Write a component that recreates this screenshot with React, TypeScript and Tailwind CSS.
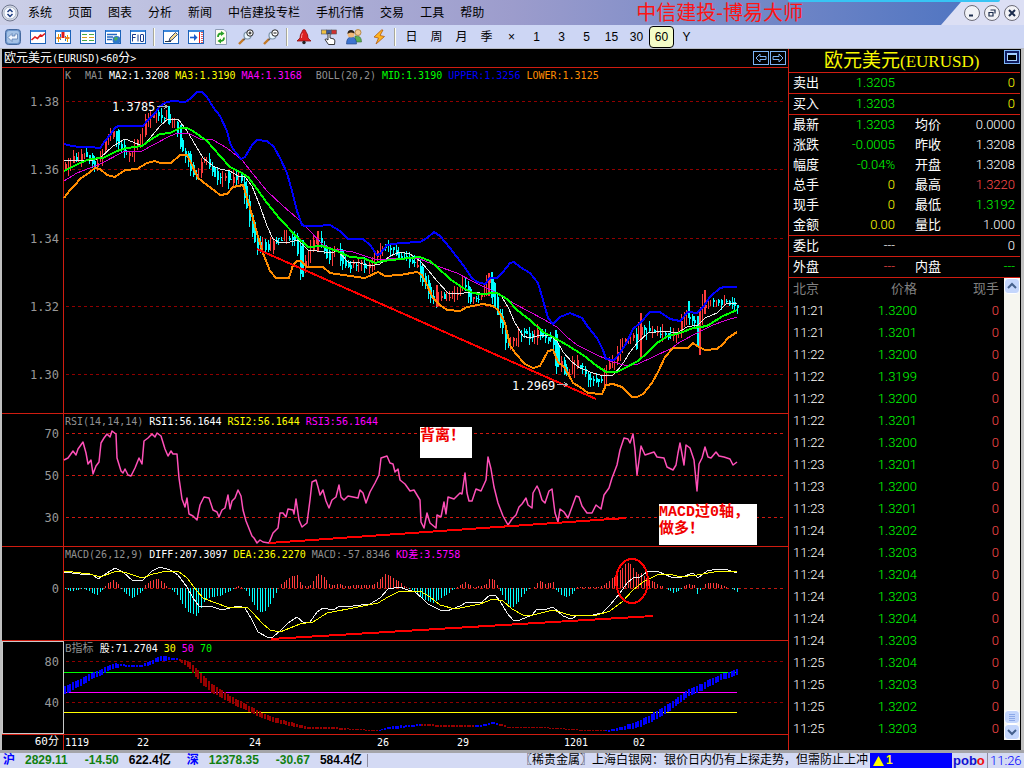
import React from "react";

type Pt = [number, number];

const MONO = "font-['DejaVu_Sans_Mono','Noto_Sans_CJK_SC',monospace]";
const SANS = "font-['Roboto','Noto_Sans_CJK_SC',sans-serif]";

/* ---------- series helpers ---------- */

const parse = (s: string): Pt[] =>
  s.trim().split(/\s+/).map((p) => p.split(",").map(Number) as Pt);

const at = (pts: Pt[], x: number): number => {
  if (x <= pts[0][0]) return pts[0][1];
  for (let i = 1; i < pts.length; i++) {
    if (x <= pts[i][0]) {
      const [x0, y0] = pts[i - 1];
      const [x1, y1] = pts[i];
      return y0 + ((y1 - y0) * (x - x0)) / (x1 - x0 || 1);
    }
  }
  return pts[pts.length - 1][1];
};

const noise = (i: number, k: number): number => {
  const v = Math.sin(i * 12.9898 + k * 78.233) * 43758.5453;
  return v - Math.floor(v);
};

const FIRST = 65;
const LAST = 737;
const STEP = (LAST - FIRST) / 252;
const slots = Array.from({ length: 253 }, (_, i) => Math.round(FIRST + i * STEP));

/* ---------- price pane ---------- */

const upper =
  "64,144 72,146 80,147 90,147 100,148 105,141 110,135 115,128 118,126 143,126 147,121 155,113 160,106 167,102 173,101 185,102 190,99 197,92 202,92 207,97 213,107 220,116 227,131 230,143 233,149 241,159 245,157 252,145 257,140 267,141 274,147 280,158 287,173 292,191 297,211 302,225 305,226 317,226 330,225 340,231 348,239 363,239 370,245 377,255 380,254 387,245 400,243 420,242 427,238 434,232 440,236 450,248 463,265 472,278 477,282 485,284 490,278 497,278 503,272 510,263 514,262 520,267 530,273 538,283 543,300 548,318 553,324 560,317 570,313 582,318 588,327 597,338 603,350 606,359 614,360 620,353 627,342 633,329 640,323 650,312 660,312 670,319 680,321 688,312 697,313 703,307 710,297 720,288 725,287 737,287";
const mid =
  "64,171 80,163 90,159 103,158 117,151 127,148 142,146 150,140 160,134 170,133 180,128 187,128 193,131 207,141 220,156 230,167 240,172 248,177 257,189 267,203 280,219 297,237 308,247 322,246 337,251 350,257 363,258 375,263 383,261 400,259 420,257 430,261 437,267 450,279 463,288 473,293 480,294 497,293 507,299 517,310 530,320 543,332 553,337 567,345 583,355 597,366 606,372 617,372 627,367 638,361 647,353 657,343 668,336 680,333 693,328 707,326 723,316 737,310";
const ma2 =
  "64,160 90,161 100,158 113,146 125,139 133,142 142,146 150,138 160,126 168,119 178,119 187,131 193,141 203,158 213,166 220,169 230,171 238,176 245,177 252,186 260,206 267,226 273,239 280,243 290,242 298,240 308,250 317,251 330,253 338,251 348,262 360,263 370,266 380,264 390,256 400,252 410,254 420,261 428,270 437,281 448,293 460,294 468,292 480,293 500,294 508,307 515,323 523,336 530,338 540,335 550,336 557,341 563,352 572,362 580,368 593,373 603,376 613,375 622,365 630,352 638,342 648,333 665,331 677,333 687,327 698,325 705,318 717,313 727,303 737,303";
const ma4 =
  "64,181 77,173 100,164 123,152 142,151 153,145 170,136 178,133 190,134 200,139 213,140 227,148 242,160 253,174 267,191 283,206 297,218 310,231 323,245 333,249 353,252 377,260 400,258 420,259 437,266 457,273 472,281 480,285 497,293 513,303 530,312 543,319 557,327 567,337 577,345 593,353 610,361 627,366 638,364 653,357 672,348 680,342 697,333 713,325 727,320 737,317";
const lower =
  "64,198 70,190 75,185 80,179 90,172 95,168 100,169 107,175 115,177 125,170 137,169 147,163 155,161 160,163 171,163 180,155 187,155 192,165 198,178 207,185 215,191 220,195 227,194 233,187 243,185 245,191 250,208 257,233 263,253 270,271 276,278 289,278 293,265 297,261 301,261 307,267 323,267 330,273 343,275 365,278 378,272 385,276 400,275 417,272 422,275 427,285 433,298 440,305 447,310 460,311 467,307 483,304 493,306 498,310 505,323 510,345 515,353 525,364 533,368 540,366 548,351 553,350 558,362 565,368 573,383 580,387 588,393 602,394 606,385 613,384 622,387 632,397 637,397 643,394 652,383 658,372 665,357 673,348 688,348 693,343 697,346 705,350 717,349 723,344 728,338 737,332";
const closes = parse(
  "64,170 70,164 75,157 80,158 84,152 90,158 95,165 100,160 103,150 107,140 112,131 116,128 118,140 122,148 126,152 130,155 134,150 138,141 141,145 145,124 150,118 155,115 160,114 165,117 168,115 171,122 175,121 178,128 180,140 183,149 187,153 190,163 195,173 198,175 202,163 206,161 210,165 215,172 219,178 222,179 226,172 230,180 235,178 240,176 243,180 246,198 249,210 252,222 256,240 259,248 263,243 267,246 270,248 275,240 280,240 285,237 290,236 295,238 297,240 300,258 302,270 306,262 309,255 313,243 317,236 322,243 326,250 330,258 334,252 338,247 342,258 346,262 351,266 356,262 362,263 367,266 370,267 374,260 378,256 382,248 386,246 390,245 395,250 400,256 405,257 410,262 414,263 420,268 422,278 427,284 431,296 436,303 440,298 444,295 447,300 452,295 458,293 462,288 465,280 469,292 472,303 476,296 481,297 485,293 488,280 491,278 494,295 497,308 500,318 504,328 508,344 512,341 516,340 521,334 526,330 531,338 536,333 539,330 544,338 550,338 554,333 558,365 562,360 566,372 570,376 573,366 578,362 582,365 586,373 590,379 595,378 600,379 605,376 608,368 613,363 618,353 622,346 626,342 630,340 635,332 638,345 640,325 644,330 648,330 654,328 658,332 664,332 669,335 674,335 679,330 684,320 688,313 692,318 696,325 698,335 700,318 704,300 708,304 712,302 716,300 720,303 726,302 731,304 737,305",
);

interface Candle {
  x: number;
  high: number;
  low: number;
  top: number;
  bottom: number;
  up: boolean;
}

const candles: Candle[] = slots.map((x, i) => {
  const a = at(closes, x - 2) + (noise(i, 1) - 0.5) * 6;
  const b = at(closes, x + 2) + (noise(i, 2) - 0.5) * 6;
  const top = Math.round(Math.min(a, b));
  const bottom = Math.round(Math.max(a, b)) + 1;
  return {
    x,
    top,
    bottom,
    high: Math.round(top - noise(i, 3) * 7),
    low: Math.round(bottom + noise(i, 4) * 7),
    up: b < a,
  };
});

const spikes: { x: number; y1: number; y2: number; up: boolean }[] = [
  { x: 168, y1: 106, y2: 124, up: false },
  { x: 302, y1: 240, y2: 277, up: false },
  { x: 317, y1: 231, y2: 252, up: true },
  { x: 436, y1: 285, y2: 307, up: true },
  { x: 488, y1: 273, y2: 296, up: true },
  { x: 491, y1: 272, y2: 298, up: false },
  { x: 555, y1: 330, y2: 366, up: false },
  { x: 640, y1: 313, y2: 357, up: true },
  { x: 688, y1: 301, y2: 318, up: false },
  { x: 697, y1: 316, y2: 346, up: false },
  { x: 699, y1: 312, y2: 355, up: true },
  { x: 704, y1: 290, y2: 314, up: true },
];

const RED = "#ff3c3c";
const CYAN = "#00ffff";

/* ---------- oscillator panes ---------- */

const rsi =
  "64,460 68,458 73,451 76,455 78,449 83,442 86,453 88,464 91,460 93,474 96,466 99,462 101,443 104,438 107,434 110,437 112,431 116,434 117,458 121,471 123,473 125,469 128,475 131,476 135,468 139,458 142,464 144,441 148,438 152,434 155,437 157,433 161,436 165,449 168,456 171,451 173,454 177,454 179,478 182,499 185,507 187,498 189,514 193,516 197,520 200,505 204,497 209,498 213,510 217,512 219,517 222,510 225,508 228,495 230,509 232,501 235,498 238,490 241,496 243,510 246,521 248,526 252,536 254,538 257,543 260,540 263,542 269,543 273,533 278,528 280,513 283,513 286,517 288,509 293,510 294,514 296,499 299,520 302,527 307,523 310,500 312,482 316,480 318,487 320,495 323,490 326,501 329,508 332,500 336,497 339,485 341,497 344,500 348,496 358,498 360,490 363,493 366,503 370,492 375,483 379,475 381,458 387,456 390,463 393,464 395,472 398,469 400,480 405,484 410,491 414,490 420,500 421,522 424,528 427,513 430,523 436,528 437,515 441,517 444,502 446,514 448,497 454,499 460,493 462,494 465,473 467,493 469,501 472,501 476,489 481,491 486,480 488,457 491,469 494,487 498,503 503,516 508,525 512,519 516,515 519,507 522,504 526,498 528,505 532,508 533,493 537,486 539,490 542,500 545,503 549,491 552,489 555,513 558,522 560,509 564,512 568,518 572,507 576,496 579,497 582,506 587,513 592,513 596,505 601,509 604,495 609,488 612,478 617,465 620,450 624,438 628,439 630,443 633,434 635,450 637,475 641,446 645,455 654,452 657,457 664,458 667,467 673,470 676,465 678,453 680,443 684,465 686,445 690,448 694,460 697,491 699,464 702,458 705,447 708,457 711,458 716,452 719,456 724,457 730,459 733,465 737,462";
const diff =
  "64,572 80,574 92,574 98,579 107,573 115,568 123,572 133,581 143,580 152,571 160,567 170,570 178,575 187,587 193,598 199,606 210,606 222,610 238,606 245,608 252,620 258,632 267,637 273,637 282,629 288,623 297,617 304,623 310,622 317,612 323,608 333,610 340,606 353,606 370,604 380,598 388,589 400,587 405,589 415,592 422,598 428,604 440,610 447,611 460,606 467,602 482,602 490,595 495,595 500,601 507,613 513,620 520,620 532,615 537,609 547,609 553,607 563,616 571,619 578,615 593,615 602,613 610,605 620,593 627,583 633,578 640,577 647,572 657,571 673,578 682,577 693,573 698,578 707,571 718,569 728,570 737,573";
const dea =
  "64,571 90,574 100,577 117,571 127,573 142,578 153,574 167,571 178,571 187,578 197,591 203,598 213,602 227,607 247,607 253,613 262,623 270,630 280,632 290,628 300,624 313,622 327,613 353,608 378,603 388,597 400,591 420,591 430,597 440,605 455,609 480,604 493,599 503,601 512,609 523,615 533,615 553,610 573,616 597,615 610,611 623,601 633,590 643,582 657,575 670,574 680,577 697,575 720,571 737,572";
const hist = parse(
  "64,-1 70,-3 78,-2 84,-1 90,-4 97,-7 101,-3 104,1 108,5 114,8 118,4 121,-1 126,-6 132,-10 137,-7 142,-3 144,2 150,7 157,9 162,7 167,1 172,-2 178,-8 182,-16 188,-24 196,-28 200,-22 205,-12 212,-9 220,-8 228,-4 234,-1 238,2 242,1 246,-3 252,-14 258,-24 264,-24 270,-16 276,-5 279,2 284,6 290,11 297,13 301,3 307,1 311,4 317,14 323,13 328,4 334,3 340,4 346,2 355,3 365,3 372,3 378,7 385,14 390,12 395,9 400,6 405,1 410,-1 417,-6 424,-12 433,-15 440,-11 448,-6 453,-1 458,1 464,6 468,4 473,1 480,2 486,4 490,10 494,8 498,1 500,-3 505,-12 511,-21 517,-15 522,-8 528,-1 534,1 539,7 545,4 553,6 555,-1 560,-6 567,-10 573,-5 577,1 590,1 598,1 604,3 610,8 616,13 620,18 625,24 628,25 632,22 637,14 641,15 647,9 653,7 658,3 664,1 670,-3 674,-6 678,-3 683,1 688,4 694,3 697,-6 700,-2 705,4 710,5 716,5 722,2 727,1 731,-1 737,-4",
);
const ribbon = parse(
  "64,690 72,687 83,681 92,676 100,673 107,669 115,666 122,665 130,666 142,666 150,663 158,659 165,658 178,659 182,661 190,665 196,672 203,680 212,688 220,693 230,699 240,704 250,709 262,715 275,720 290,724 300,726 310,728 330,728 350,729 365,730 380,730 390,728 400,727 420,725 450,726 480,726 494,723 501,725 508,727 549,728 580,730 603,731 615,730 640,724 653,717 671,706 688,693 702,687 719,678 737,672",
);
const ribbonSize = parse(
  "64,8 100,6 115,5 122,2 142,2 150,4 165,5 172,2 180,2 190,7 200,10 220,8 250,6 270,5 290,4 310,2 380,1 395,3 410,2 605,1 620,3 635,6 655,8 690,7 737,6",
);
const isFalling = (x: number) =>
  (x > 179 && x < 380) || (x > 420 && x < 476) || (x > 499 && x < 606);

/* ---------- small pieces ---------- */

const Line = ({ pts, color, w = 1 }: { pts: string; color: string; w?: number }) => (
  <polyline points={pts} fill="none" stroke={color} strokeWidth={w} strokeLinejoin="round" />
);

const Grid = ({ ys, color }: { ys: number[]; color: string }) => (
  <>
    {ys.map((y) => (
      <line key={y} x1="66" x2="786" y1={y + 0.5} y2={y + 0.5} stroke={color} strokeDasharray="3 3" />
    ))}
  </>
);

interface LegendItem {
  text: string;
  className: string;
}

const Legend = ({ items }: { items: LegendItem[] }) => (
  <div className={`flex h-4 items-center gap-[6px] whitespace-nowrap pl-px text-[10px] leading-4 ${MONO}`}>
    {items.map((it) => (
      <span key={it.text} className={it.className}>
        {it.text}
      </span>
    ))}
  </div>
);

interface PaneProps {
  label: string;
  top: number;
  height: number;
  ticks: { y: number; text: string }[];
  legend: LegendItem[];
  selected?: boolean;
  children: React.ReactNode;
  note?: React.ReactNode;
}

const Pane = ({ label, top, height, ticks, legend, selected, children, note }: PaneProps) => (
  <section aria-label={label} className="relative flex border-b border-[#d01c10]">
    <div className={`w-[62px] shrink-0 ${selected ? "border border-[#c8c8c8]" : "border-r border-[#d01c10]"}`}>
      <svg
        width="60"
        height={height - 2}
        viewBox={`${selected ? 3 : 2} ${selected ? top + 1 : top} 60 ${height - 2}`}
        className={`block fill-[#989898] text-[12px] ${MONO}`}
      >
        {ticks.map((t) => (
          <text key={t.text} x="59" y={t.y + 5} textAnchor="end">
            {t.text}
          </text>
        ))}
      </svg>
    </div>
    <div className="min-w-0 flex-1">
      <Legend items={legend} />
      <svg
        viewBox={`64 ${top + 16} 724 ${height - 16}`}
        preserveAspectRatio="xMinYMin meet"
        shapeRendering="crispEdges"
        className="block w-full overflow-visible"
      >
        {children}
      </svg>
    </div>
    {note}
  </section>
);

/* ---------- toolbar ---------- */

const Frame = ({ children }: { children?: React.ReactNode }) => (
  <>
    <rect x="0.5" y="1.5" width="15" height="13" fill="#fff" stroke="#1c62b8" />
    <rect x="1" y="1" width="14" height="2" fill="#3a86dc" />
    {children}
  </>
);

const Magnifier = ({ plus }: { plus: boolean }) => (
  <>
    <path d="M1 15 L6 10" stroke="#c47a28" strokeWidth="2.4" />
    <path d="M5.500 11 L7 9.500" stroke="#555" strokeWidth="1.5" />
    <circle cx="9.500" cy="6.500" r="3.500" fill="#e8f6ff" stroke="#7d94a8" strokeWidth="1.200" />
    <circle cx="12" cy="4" r="3.200" fill="#fff" stroke="#222" />
    <path d={plus ? "M10.500 4 H13.500 M12 2.500 V5.500" : "M10.500 4 H13.500"} stroke="#111" />
  </>
);

const icons: { name: string; art: React.ReactNode }[][] = [
  [
    {
      name: "返回",
      art: (
        <>
          <rect x="0.5" y="0.5" width="15" height="15" rx="3" fill="#6f97cc" stroke="#44699f" />
          <rect x="2" y="2" width="12" height="12" rx="2" fill="#a4c2e6" />
          <path d="M3 8.500 L7 4.500 V7 H10 V5 H12.500 V10 H7 V12.500 Z" fill="#f0f6ff" stroke="#5577aa" strokeWidth="0.7" />
        </>
      ),
    },
    {
      name: "分时图",
      art: (
        <Frame>
          <path d="M1.500 11 L5 8 L7.500 9.500 L10.500 6 L12 7 L15 4.500" fill="none" stroke="#e01818" strokeWidth="1.600" />
        </Frame>
      ),
    },
    {
      name: "K线图",
      art: (
        <Frame>
          <path d="M8 3 V9" stroke="#e01818" strokeWidth="3" />
          <path d="M3.500 5 V13 M12.500 6 V13" stroke="#e0a000" />
          <path d="M5.500 5 V11 M10.500 7 V12" stroke="#1c74c8" />
          <path d="M1.500 9 H6 M10 9 H14.500" stroke="#f08020" strokeWidth="2" />
        </Frame>
      ),
    },
    {
      name: "报价表",
      art: (
        <Frame>
          <path d="M2 5.500 H7 M9 5.500 H14" stroke="#48a848" />
          <path d="M2 8.500 H7 M9 8.500 H14" stroke="#d8a020" />
          <path d="M2 11.500 H7 M9 11.500 H14" stroke="#48a848" />
        </Frame>
      ),
    },
    {
      name: "资讯",
      art: (
        <Frame>
          <path d="M2 5.500 H12 M2 8 H8 M2 10.500 H7" stroke="#2468c0" strokeWidth="1.400" />
          <circle cx="11.500" cy="11" r="4" fill="#2f78c8" />
          <path d="M9 9 Q12 7 13 9 Q12 12 10 12 Z" fill="#46b05a" />
        </Frame>
      ),
    },
    {
      name: "F10",
      art: (
        <Frame>
          <path
            d="M2.500 12.500 V5.500 H6 M2.500 8.500 H5.500 M8 5.500 V12.500 M10.500 6 V12 M13.500 6 V12 M10.500 5.500 H13.500 M10.500 12.500 H13.500"
            fill="none"
            stroke="#1a3c8c"
          />
        </Frame>
      ),
    },
  ],
  [
    {
      name: "画线",
      art: (
        <Frame>
          <path d="M2 12.500 H8" stroke="#234" />
          <path d="M6 12 L7 9 L12.500 3.500 L14.500 5.500 L9 11 Z" fill="#f6d98a" stroke="#223a70" strokeWidth="0.9" />
        </Frame>
      ),
    },
    {
      name: "右移",
      art: (
        <Frame>
          <path d="M2 8.500 H8" stroke="#1a5ccc" strokeWidth="1.600" />
          <path d="M6 5 L9.500 8.500 L6 12 Z" fill="#1a5ccc" />
          <path d="M11.500 3 V14" stroke="#e02020" />
          <path d="M14 3 V14" stroke="#e02020" strokeWidth="1.500" strokeDasharray="1 1" />
        </Frame>
      ),
    },
    {
      name: "刷新",
      art: (
        <>
          <path d="M2.500 0.500 H11 L13.500 3 V15.500 H2.500 Z" fill="#fdfdf0" stroke="#8c9cb4" />
          <path d="M5 8 Q5 4.500 8.500 4.500" fill="none" stroke="#28a028" strokeWidth="1.800" />
          <path d="M8 2 L11.500 4.500 L8 7 Z" fill="#28a028" />
          <path d="M11 8.500 Q11 12 7.500 12" fill="none" stroke="#28a028" strokeWidth="1.800" />
          <path d="M8 9.500 L4.500 12 L8 14.500 Z" fill="#28a028" />
        </>
      ),
    },
    { name: "放大", art: <Magnifier plus /> },
    { name: "缩小", art: <Magnifier plus={false} /> },
  ],
  [
    {
      name: "预警",
      art: (
        <>
          <path d="M8 0.500 Q10 1 10 3 Q12 5 12 9 L15 12 H1 L4 9 Q4 5 6 3 Q6 1 8 0.500 Z" fill="#dc2020" stroke="#8c1010" strokeWidth="0.8" />
          <circle cx="8" cy="13.500" r="1.700" fill="#222" />
          <path d="M6.500 4.500 Q5.500 6 5.500 9" fill="none" stroke="#ff9c9c" />
        </>
      ),
    },
    {
      name: "下单",
      art: (
        <>
          <rect x="0.5" y="1" width="5" height="4" fill="#f0c040" stroke="#555" strokeWidth="0.6" />
          <rect x="5.500" y="1" width="5" height="4" fill="#3c5c9c" stroke="#555" strokeWidth="0.6" />
          <rect x="10.500" y="1" width="5" height="4" fill="#d03030" stroke="#555" strokeWidth="0.6" />
          <path d="M7 4.500 Q8.500 3.500 9 5 V9 L13 10 Q14.500 11 13.500 15.500 H7.500 L4 10.500 Q5 9 7 11 Z" fill="#fff" stroke="#222" strokeWidth="0.9" />
        </>
      ),
    },
    {
      name: "用户",
      art: (
        <>
          <path d="M9 7 Q15.500 6 15.500 13 H9 Z" fill="#5cb050" stroke="#356c30" strokeWidth="0.6" />
          <circle cx="12" cy="3.500" r="3" fill="#f2c890" stroke="#a87a30" strokeWidth="0.8" />
          <path d="M0.500 15 Q0.500 8 5.500 8 Q10.500 8 10.500 15 Z" fill="#3c74d0" stroke="#1f3f80" strokeWidth="0.6" />
          <circle cx="5" cy="5" r="3.500" fill="#f0b878" />
          <path d="M1.500 5 Q1.500 1 5 1 Q8.500 1 8.500 4.500 Q5 3 3 4 Z" fill="#2a2018" />
        </>
      ),
    },
    {
      name: "闪电下单",
      art: <path d="M10.500 1 L3 8 L7.500 9 L5 15 L13.500 7.500 L9 6.500 L12 1 Z" fill="#ffb420" stroke="#b45c10" strokeWidth="0.8" />,
    },
  ],
];

const menus = ["系统", "页面", "图表", "分析", "新闻", "中信建投专栏", "手机行情", "交易", "工具", "帮助"];
const periods = ["日", "周", "月", "季", "×", "1", "3", "5", "15", "30", "60", "Y"];

const WinButton = ({ label, children }: { label: string; children: React.ReactNode }) => (
  <button aria-label={label} className="block size-4 rounded-full border border-[#6c6c78] bg-[#f2f2f6]">
    <svg viewBox="0 0 14 14" className="block size-full" fill="none" stroke="#1c2c4c" strokeWidth="1.5">
      {children}
    </svg>
  </button>
);

const TopBar = () => (
  <header className="relative flex h-[25px] items-center bg-linear-to-r from-[#ccd0e8] via-[#9c9ccc] via-50% to-[#4670c0] text-xs text-black">
    <svg viewBox="0 0 18 18" className="ml-px size-[18px] shrink-0" aria-hidden="true">
      <circle cx="9" cy="9" r="8" fill="#d4d8e4" stroke="#707890" />
      <circle cx="9" cy="9" r="6" fill="#f8faff" stroke="#b0bccc" />
      <path d="M6.500 8 L9 5.500 L11.500 8 M6.500 10 L9 12.500 L11.500 10" fill="none" stroke="#1c3c80" strokeWidth="1.500" />
    </svg>
    <nav className="ml-[9px] flex gap-4 whitespace-nowrap">
      {menus.map((m) => (
        <button key={m}>{m}</button>
      ))}
    </nav>
    <div className="flex min-w-0 flex-1 justify-end">
      <h1 className="mr-[138px] whitespace-nowrap text-[20px] leading-6 text-[#ff1414]">中信建投-博易大师</h1>
    </div>
    <div className="flex h-full shrink-0">
      <svg viewBox="0 0 21 25" className="block h-full w-[21px]" preserveAspectRatio="none" aria-hidden="true">
        <path d="M0 25 L20 2 H21 V25 Z" fill="#dcdff4" />
      </svg>
      <div className="flex items-center gap-1 bg-[#dcdff4] pl-[2px] pr-1">
        <WinButton label="最小化">
          <path d="M4 9.500 H8" strokeWidth="2" />
        </WinButton>
        <WinButton label="还原">
          <path d="M5.500 4 H10 V7.500 M4 6.500 H8 V10 H4 Z" strokeWidth="1.200" />
        </WinButton>
        <WinButton label="关闭">
          <path d="M4 4 L10 10 M10 4 L4 10" strokeWidth="2" />
        </WinButton>
      </div>
    </div>
    <div className="absolute right-6 top-0 h-[2px] w-[212px] rounded-b bg-[#38c4f4]" />
  </header>
);

const ToolBar = () => (
  <div className="flex h-6 items-center border-b border-[#b8bcc4] bg-[#cdd6f4] text-xs text-black">
    {icons.map((group, g) => (
      <div key={g} className="flex items-center">
        {group.map((ic) => (
          <button key={ic.name} aria-label={ic.name} className="flex w-[25px] justify-center">
            <svg viewBox="0 0 16 16" className="size-4" fill="none">
              {ic.art}
            </svg>
          </button>
        ))}
        <span className="mx-[3px] h-[18px] w-[2px] border-l border-[#a8a89c] bg-[#fffff0]" />
      </div>
    ))}
    {periods.map((p) => (
      <button
        key={p}
        className={`flex h-[22px] w-[25px] items-center justify-center ${
          p === "60" ? "rounded border border-black bg-[#f4fcc8]" : ""
        }`}
      >
        {p}
      </button>
    ))}
  </div>
);

/* ---------- chart area ---------- */

const ArrowButton = ({ flip }: { flip?: boolean }) => (
  <button aria-label={flip ? "下一个" : "上一个"} className="flex h-[14px] w-4 items-center justify-center border border-[#7cb4f4]">
    <svg viewBox="0 0 12 10" className={`h-[10px] w-3 ${flip ? "rotate-180" : ""}`} fill="none" stroke="#7cb4f4">
      <path d="M1 5 L5 1 V3.500 H11 V6.500 H5 V9 Z" />
    </svg>
  </button>
);

const days: Pt[] = [
  [65, 1119],
  [137, 22],
  [249, 24],
  [377, 26],
  [457, 29],
  [564, 1201],
  [633, 2],
];

const Charts = () => (
  <div className="min-w-0 flex-1 border-r border-[#d01c10]">
    <div className="flex h-[19px] items-center justify-between border-b border-[#d01c10] pl-[2px] pr-[2px] text-white">
      <h2 className={`text-[12px] ${MONO}`}>
        欧元美元<span className="text-[10px]">(EURUSD)&lt;60</span>分<span className="text-[10px]">&gt;</span>
      </h2>
      <div className="flex gap-px">
        <ArrowButton />
        <ArrowButton flip />
      </div>
    </div>

    <Pane
      label="K线"
      top={68}
      height={345}
      ticks={[
        { y: 101, text: "1.38" },
        { y: 169, text: "1.36" },
        { y: 238, text: "1.34" },
        { y: 306, text: "1.32" },
        { y: 374, text: "1.30" },
      ]}
      legend={[
        { text: "K", className: "mr-2 text-[#909090]" },
        { text: "MA1", className: "text-[#909090]" },
        { text: "MA2:1.3208", className: "text-white" },
        { text: "MA3:1.3190", className: "text-[#ffff00]" },
        { text: "MA4:1.3168", className: "mr-2 text-[#ff00ff]" },
        { text: "BOLL(20,2)", className: "text-[#909090]" },
        { text: "MID:1.3190", className: "text-[#00ff00]" },
        { text: "UPPER:1.3256", className: "text-[#0000ff]" },
        { text: "LOWER:1.3125", className: "text-[#ff8c00]" },
      ]}
    >
      <Grid ys={[101, 169, 238, 306, 374]} color="#900000" />
      {candles.map((c, i) => (
        <g key={i} fill={c.up ? RED : CYAN}>
          <rect x={c.x} y={c.high} width="1" height={c.low - c.high} />
          <rect x={c.x} y={c.top} width={i % 3 === 0 || !c.up ? 2 : 1} height={c.bottom - c.top} />
        </g>
      ))}
      {spikes.map((s) => (
        <rect key={s.x} x={s.x} y={s.y1} width="2" height={s.y2 - s.y1} fill={s.up ? RED : CYAN} />
      ))}
      <Line pts={ma2} color="#e8e8e8" />
      <Line pts={ma4} color="#d800d8" />
      <Line pts={mid} color="#00ff00" w={2} />
      <Line pts={upper} color="#0000ff" w={2} />
      <Line pts={lower} color="#ff8c00" w={2} />
      <path d="M257 249 L596 399" stroke="#ff0000" strokeWidth="2" />
      <g className={`fill-white text-[12px] ${MONO}`}>
        <text x="112" y="111">1.3785</text>
        <text x="512" y="390">1.2969</text>
      </g>
      <path d="M157 106.500 H167 M164 104 L167 106.500 L164 109 M557 384.500 H567 M564 382 L567 384.500 L564 387" fill="none" stroke="#b0b0b0" />
    </Pane>

    <Pane
      label="RSI"
      top={414}
      height={132}
      ticks={[
        { y: 433, text: "70" },
        { y: 475, text: "50" },
        { y: 517, text: "30" },
      ]}
      legend={[
        { text: "RSI(14,14,14)", className: "text-[#909090]" },
        { text: "RSI1:56.1644", className: "text-white" },
        { text: "RSI2:56.1644", className: "text-[#ffff00]" },
        { text: "RSI3:56.1644", className: "text-[#ff00ff]" },
      ]}
      note={
        <>
          <p className={`absolute left-[418px] top-[13px] h-[31px] w-[52px] bg-white text-[15px] font-bold leading-[17px] text-[#f00000] ${SANS}`}>
            背离！
          </p>
          <p className="absolute left-[657px] top-[90px] w-[98px] whitespace-nowrap bg-white pb-[7px] font-['Liberation_Mono','Noto_Sans_CJK_SC',monospace] text-[15px] font-bold leading-[17px] text-[#f00000]">
            MACD过0轴，
            <br />
            做多！
          </p>
        </>
      }
    >
      <Grid ys={[433, 475, 517]} color="#d01810" />
      <g shapeRendering="auto">
        <polyline points={rsi} fill="none" stroke="#ff50b8" strokeWidth="1.500" strokeLinejoin="round" />
      </g>
      <path d="M269 543 L626 518" stroke="#ff0000" strokeWidth="2" />
    </Pane>

    <Pane
      label="MACD"
      top={547}
      height={93}
      ticks={[{ y: 588, text: "0" }]}
      legend={[
        { text: "MACD(26,12,9)", className: "text-[#909090]" },
        { text: "DIFF:207.3097", className: "text-white" },
        { text: "DEA:236.2270", className: "text-[#ffff00]" },
        { text: "MACD:-57.8346", className: "text-[#909090]" },
        { text: "KD差:3.5758", className: "text-[#ff00ff]" },
      ]}
    >
      <Grid ys={[588]} color="#c01810" />
      {slots.map((x, i) => {
        const v = Math.round(at(hist, x));
        return v === 0 ? null : (
          <rect
            key={i}
            x={x}
            y={v > 0 ? 588 - v : 588}
            width="1"
            height={Math.abs(v)}
            fill={v > 0 ? RED : CYAN}
          />
        );
      })}
      <Line pts={diff} color="#f0f0f0" />
      <Line pts={dea} color="#ffff00" />
      <ellipse cx="632" cy="581" rx="16" ry="22" fill="none" stroke="#ff0000" strokeWidth="2" />
      <path d="M271 639 L653 616" stroke="#ff0000" strokeWidth="2" />
    </Pane>

    <Pane
      label="B指标"
      top={641}
      height={93}
      selected
      ticks={[
        { y: 661, text: "80" },
        { y: 702, text: "40" },
      ]}
      legend={[
        { text: "B指标", className: "text-[11px] text-[#909090]" },
        { text: "股:71.2704", className: "text-white" },
        { text: "30", className: "text-[#ffff00]" },
        { text: "50", className: "text-[#ff00ff]" },
        { text: "70", className: "text-[#00ff00]" },
      ]}
    >
      <Grid ys={[661, 702]} color="#900000" />
      <rect x="64" y="672" width="673" height="1" fill="#00ff00" />
      <rect x="64" y="692" width="673" height="1" fill="#ff00ff" />
      <rect x="64" y="712" width="673" height="1" fill="#ffff00" />
      {slots.map((x, i) => {
        const h = Math.max(1, Math.round(at(ribbonSize, x)));
        return (
          <rect
            key={i}
            x={x - 1}
            y={Math.round(at(ribbon, x) - h / 2)}
            width="2"
            height={h}
            fill={isFalling(x) ? "#980000" : "#0000ff"}
          />
        );
      })}
    </Pane>

    <div className="flex h-[15px] text-white">
      <div className={`w-[62px] shrink-0 border-r border-[#d01c10] pr-1 text-right text-[11px] leading-[14px] ${MONO}`}>
        60分
      </div>
      <svg viewBox="64 735 724 15" preserveAspectRatio="xMinYMin meet" className={`block min-w-0 flex-1 fill-white text-[10px] ${MONO}`}>
        {days.map(([x, d]) => (
          <text key={x} x={x} y="746">
            {String(d).padStart(2, "0")}
          </text>
        ))}
      </svg>
    </div>
  </div>
);

/* ---------- quote sidebar ---------- */

const W = "text-white";
const G = "text-[#00ff00]";
const Y = "text-[#ffff00]";
const R = "text-[#ff4c4c]";

interface QuoteRow {
  a: string;
  av: string;
  ac: string;
  b?: string;
  bv: string;
  bc: string;
  line?: boolean;
}

const quotes: QuoteRow[] = [
  { a: "卖出", av: "1.3205", ac: G, bv: "0", bc: Y, line: true },
  { a: "买入", av: "1.3203", ac: G, bv: "0", bc: Y, line: true },
  { a: "最新", av: "1.3203", ac: G, b: "均价", bv: "0.0000", bc: W },
  { a: "涨跌", av: "-0.0005", ac: G, b: "昨收", bv: "1.3208", bc: W },
  { a: "幅度", av: "-0.04%", ac: G, b: "开盘", bv: "1.3208", bc: W },
  { a: "总手", av: "0", ac: Y, b: "最高", bv: "1.3220", bc: R },
  { a: "现手", av: "0", ac: Y, b: "最低", bv: "1.3192", bc: G },
  { a: "金额", av: "0.00", ac: Y, b: "量比", bv: "1.000", bc: W, line: true },
  { a: "委比", av: "---", ac: W, bv: "0", bc: W, line: true },
  { a: "外盘", av: "---", ac: R, b: "内盘", bv: "---", bc: G, line: true },
];

const trades: [string, string][] = [
  ["11:21", "1.3200"],
  ["11:21", "1.3201"],
  ["11:22", "1.3200"],
  ["11:22", "1.3199"],
  ["11:22", "1.3200"],
  ["11:22", "1.3201"],
  ["11:22", "1.3200"],
  ["11:23", "1.3201"],
  ["11:23", "1.3200"],
  ["11:23", "1.3201"],
  ["11:24", "1.3202"],
  ["11:24", "1.3203"],
  ["11:24", "1.3204"],
  ["11:24", "1.3203"],
  ["11:24", "1.3204"],
  ["11:24", "1.3203"],
  ["11:25", "1.3204"],
  ["11:25", "1.3203"],
  ["11:25", "1.3202"],
  ["11:25", "1.3203"],
];

const ScrollButton = ({ label, d }: { label: string; d: string }) => (
  <button aria-label={label} className="block h-4 w-full rounded-sm border border-white bg-[#c4d6fc]">
    <svg viewBox="0 0 14 14" className="block size-full" fill="none" stroke="#44608c" strokeWidth="2">
      <path d={d} />
    </svg>
  </button>
);

const Sidebar = () => (
  <aside className={`w-[232px] shrink-0 border-r border-black text-[13px] leading-[18px] ${SANS}`}>
    <div className="flex h-6 items-start justify-between border-b border-[#d01c10] pl-[35px]">
      <h2 className="whitespace-nowrap font-['Liberation_Serif','Noto_Sans_CJK_SC',serif] text-[17px] leading-[23px] text-[#f8f800]">
        <span className="text-[19px]">欧元美元</span>(EURUSD)
      </h2>
      <button aria-label="最大化" className="mt-[1px] flex h-[14px] w-4 items-center justify-center border border-[#7cb4f4] bg-[#101c60]">
        <span className="block h-[8px] w-[10px] border border-t-2 border-[#a4d0ff] bg-black" />
      </button>
    </div>

    <table className="w-full table-fixed border-separate border-spacing-0 whitespace-nowrap">
      <colgroup>
        <col className="w-9" />
        <col className="w-[70px]" />
        <col className="w-[54px]" />
        <col />
      </colgroup>
      <tbody>
        {quotes.map((q) => {
          const edge = q.line ? "h-[21px] border-b border-[#d01c10] p-0" : "h-5 p-0";
          return (
            <tr key={q.a}>
              <th scope="row" className={`${edge} text-left font-normal text-white`}>
                <span className="pl-1">{q.a}</span>
              </th>
              <td className={`${edge} text-right font-light ${q.ac}`}>{q.av}</td>
              <td className={`${edge} text-left text-white`}>
                <span className="pl-5">{q.b ?? ""}</span>
              </td>
              <td className={`${edge} text-right font-light ${q.bc}`}>
                <span className="pr-[5px]">{q.bv}</span>
              </td>
            </tr>
          );
        })}
      </tbody>
    </table>

    <div className="flex">
      <table className="min-w-0 flex-1 table-fixed border-separate border-spacing-0 whitespace-nowrap">
        <colgroup>
          <col className="w-[50px]" />
          <col className="w-[78px]" />
          <col />
        </colgroup>
        <thead>
          <tr className="text-[#808080]">
            <th className="h-[22px] p-0 text-left font-normal">
              <span className="pl-1">北京</span>
            </th>
            <th className="h-[22px] p-0 text-right font-normal">价格</th>
            <th className="h-[22px] p-0 text-right font-normal">
              <span className="pr-[5px]">现手</span>
            </th>
          </tr>
        </thead>
        <tbody className="font-light">
          {trades.map(([t, p], i) => (
            <tr key={i}>
              <td className="h-[22px] p-0 text-left text-white">
                <span className="pl-1">{t}</span>
              </td>
              <td className="h-[22px] p-0 text-right text-[#00ff00]">{p}</td>
              <td className="h-[22px] p-0 text-right text-[#ff4c4c]">
                <span className="pr-[5px]">0</span>
              </td>
            </tr>
          ))}
        </tbody>
      </table>
      <div className="flex w-4 shrink-0 flex-col justify-between bg-[#f6f6f0]">
        <ScrollButton label="向上" d="M3 9 L7 5 L11 9" />
        <div>
          <div className="flex h-[14px] flex-col items-center justify-center gap-px rounded-sm border border-white bg-[#c4d6fc]">
            <i className="block h-px w-[6px] bg-[#8ca8e8]" />
            <i className="block h-px w-[6px] bg-[#8ca8e8]" />
            <i className="block h-px w-[6px] bg-[#8ca8e8]" />
            <i className="block h-px w-[6px] bg-[#8ca8e8]" />
          </div>
          <ScrollButton label="向下" d="M3 5 L7 9 L11 5" />
        </div>
      </div>
    </div>
  </aside>
);

/* ---------- status bar ---------- */

const Index = ({ name, value, change, amount }: { name: string; value: string; change: string; amount: string }) => (
  <div className="flex font-bold">
    <span className="w-[22px] text-[#0000ff]">{name}</span>
    <span className="text-[#108010]">{value}</span>
    <span className="ml-[17px] text-[#108010]">{change}</span>
    <span className="ml-[10px]">{amount}</span>
  </div>
);

const StatusBar = () => (
  <footer className="flex h-[18px] items-center whitespace-nowrap border-t-[3px] border-[#a4a4a8] bg-[#d4daf4] font-['Liberation_Sans','Noto_Sans_CJK_SC',sans-serif] text-xs leading-[15px] text-black">
    <div className="flex gap-4 pl-[3px] pr-[5px]">
      <Index name="沪" value="2829.11" change="-14.50" amount="622.4亿" />
      <Index name="深" value="12378.35" change="-30.67" amount="584.4亿" />
    </div>
    <span className="h-[13px] w-px bg-[#8c8ca0]" />
    <div className="flex min-w-0 flex-1 justify-end overflow-hidden">
      <span className="w-[350px] overflow-hidden">〖稀贵金属〗上海白银网：银价日内仍有上探走势，但需防止上冲</span>
    </div>
    <div className="flex h-[15px] w-[82px] items-center gap-[2px] bg-[#0000ff] pl-[3px] font-bold text-[#ffff00]">
      <svg viewBox="0 0 11 10" className="h-[10px] w-[11px]" aria-hidden="true">
        <path d="M5.500 0 L11 10 H0 Z" fill="#ffff00" />
      </svg>
      1
    </div>
    <span className="w-[35px] pl-px text-[13px] font-bold text-[#1010d0]">
      pob<span className="text-[#f01010]">o</span>
    </span>
    <span className={`w-[37px] border-l border-[#8c8ca0] pl-[2px] text-[13px] font-light text-[#0000ff] ${SANS}`}>11:26</span>
  </footer>
);

export default function App() {
  return (
    <div className="flex min-h-screen flex-col bg-black font-['Liberation_Sans','Noto_Sans_CJK_SC',sans-serif]">
      <TopBar />
      <ToolBar />
      <main className="flex flex-1 border-l-2 border-r-[3px] border-[#c0c0c0] bg-black">
        <Charts />
        <Sidebar />
      </main>
      <StatusBar />
    </div>
  );
}
